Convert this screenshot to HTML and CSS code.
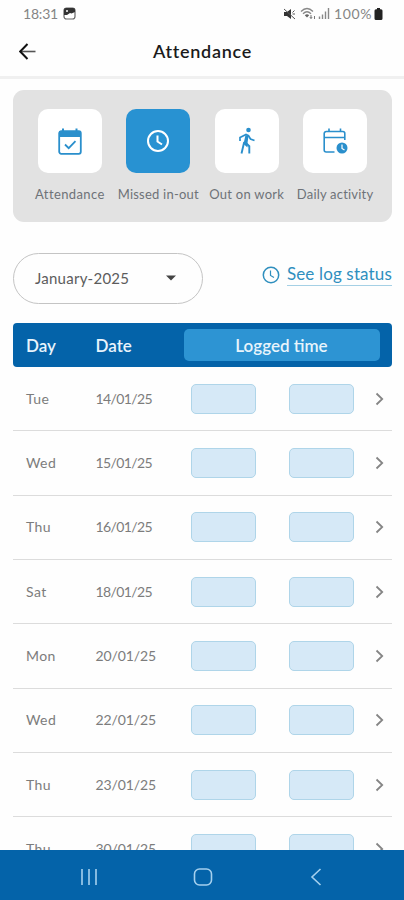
FILE: index.html
```html
<!DOCTYPE html>
<html lang="en">
<head>
    <meta charset="UTF-8">
    <meta name="viewport" content="width=device-width, initial-scale=1.0">
    <title>Attendance</title>
    <link rel="stylesheet" href="styles.css">
</head>
<body>
    <!-- Status bar -->
    <div class="status-bar">
        <span class="clock">18:31</span>
        <svg class="picture-icon" width="13" height="13" viewBox="0 0 13 13">
            <rect x="1" y="1" width="11" height="11" rx="2.500" fill="#fff" stroke="#666" stroke-width="1.200"/>
            <path d="M1 8V3a2 2 0 0 1 2-2h7a2 2 0 0 1 2 2v2L8.500 6.500 7 6 4 8z" fill="#333"/>
            <circle cx="4" cy="4" r="1" fill="#fff"/>
        </svg>
        <div class="status-right">
            <svg width="13" height="12" viewBox="0 0 13 12">
                <path d="M1 4h3l4-3v10L4 8H1z" fill="#333"/>
                <path d="M1 1l11 10M9.500 4.500l2-2M9.500 6h2.500" stroke="#555" fill="none"/>
            </svg>
            <svg class="wifi-icon" width="17" height="13" viewBox="0 0 17 13">
                <path d="M1 4.500q6-6 12 0M3 6.700q4-4 8 0" stroke="#888" stroke-width="1.300" fill="none"/>
                <path d="M4.800 8.200q2.200-2 4.400 0L7 10.500z" fill="#666"/>
                <path d="M11 8v3.500M9.800 10l1.200 1.500 1.200-1.500M14.500 12V9" stroke="#777" fill="none"/>
            </svg>
            <svg class="signal-icon" width="12" height="11" viewBox="0 0 12 11">
                <path d="M1.500 11V8.500M4.500 11V6.500M7.500 11V3.500M10.500 11V0" stroke="#888" stroke-width="1.400"/>
            </svg>
            <span class="battery-text">100%</span>
            <svg width="9" height="12" viewBox="0 0 9 12">
                <path d="M3 0h3v1.300h1a1.500 1.500 0 0 1 1.500 1.500v7.700A1.500 1.500 0 0 1 7 12H2A1.500 1.500 0 0 1 .5 10.500V2.800A1.500 1.500 0 0 1 2 1.300h1z" fill="#222"/>
            </svg>
        </div>
    </div>

    <header class="app-bar">
        <svg class="back-icon" width="17" height="17" viewBox="0 0 17 17">
            <path d="M16.500 8.500H1.500" stroke="#555" stroke-width="1.600" fill="none"/>
            <path d="M8.500 1L1.200 8.500l7.300 7.500" stroke="#111" stroke-width="2" fill="none"/>
        </svg>
        <h1>Attendance</h1>
    </header>

    <main>
        <nav class="tabs">
            <div class="tab">
                <div class="tile">
                    <svg width="24" height="27" viewBox="0 0 24 27">
                        <path d="M5 .5v3M18.500.5v3" stroke="#2a8fcc" stroke-width="2"/>
                        <rect x="1.200" y="3.200" width="21.600" height="22.600" rx="2" fill="#fff" stroke="#2a8fcc" stroke-width="1.800"/>
                        <path d="M1 3h22v6H1z" fill="#2a8fcc"/>
                        <path d="M7 16.500l3.700 3.700 6.800-7" stroke="#2a8fcc" stroke-width="1.800" fill="none"/>
                    </svg>
                </div>
                <span class="tab-label label-attendance">Attendance</span>
            </div>
            <div class="tab">
                <div class="tile active">
                    <svg width="24" height="24" viewBox="0 0 24 24" fill="none" stroke="#fff" stroke-width="2">
                        <circle cx="12" cy="12" r="10"/>
                        <path d="M11.500 6.500v6l4.500 3"/>
                    </svg>
                </div>
                <span class="tab-label label-missed">Missed in-out</span>
            </div>
            <div class="tab">
                <div class="tile">
                    <svg width="18" height="28" viewBox="0 0 18 28" fill="none" stroke="#2a8fcc">
                        <circle cx="10.500" cy="3" r="2.300" fill="#2a8fcc" stroke="none"/>
                        <path d="M7.500 8L5.500 17l4 3.500V16l1-7z" fill="#2a8fcc" stroke="none"/>
                        <path d="M2 14v-3.500L8 7.500l2.500 1.200 2 3.300 4 1.500" stroke-width="1.700"/>
                        <path d="M6.200 15L3.500 26.500M8 16l3.300 3.200V26.500" stroke-width="1.900"/>
                    </svg>
                </div>
                <span class="tab-label label-out">Out on work</span>
            </div>
            <div class="tab">
                <div class="tile">
                    <svg width="25" height="26" viewBox="0 0 25 26" fill="none" stroke="#2a8fcc" stroke-width="1.600">
                        <path d="M6 .5v3M17.500.5v3"/>
                        <path d="M11.500 24H3.200a2 2 0 0 1-2-2V5.500a2 2 0 0 1 2-2h16.600a2 2 0 0 1 2 2V12M1.200 9.500h20.600"/>
                        <circle cx="19" cy="20" r="5.500" fill="#2a8fcc" stroke="none"/>
                        <path d="M19 16.500v4l2.500 1.500" stroke="#fff" stroke-width="1.200"/>
                    </svg>
                </div>
                <span class="tab-label label-daily">Daily activity</span>
            </div>
        </nav>

        <div class="filters">
            <div class="month-select">
                <span>January-2025</span>
                <svg width="10" height="6" viewBox="0 0 10 6"><path d="M0 .5h10L5 5.500z" fill="#444"/></svg>
            </div>
            <a class="log-status">
                <svg width="18" height="18" viewBox="0 0 18 18" fill="none" stroke="#2f8fbe" stroke-width="1.500">
                    <circle cx="9" cy="9" r="7.700"/>
                    <path d="M8.500 4.500v5l3.500 2" stroke-width="1.200"/>
                </svg>
                <span>See log status</span>
            </a>
        </div>

        <div class="table-head">
            <span class="head-day">Day</span>
            <span class="head-date">Date</span>
            <div class="head-time"><span>Logged time</span></div>
        </div>

        <div class="rows">
            <div class="row">
                <span class="day">Tue</span><span class="date">14/01/25</span>
                <div class="time"></div><div class="time"></div>
                <svg class="chevron" width="9" height="14" viewBox="0 0 9 14"><path d="M1.500 1.500L7.200 7l-5.700 5.500"/></svg>
            </div>
            <div class="row">
                <span class="day">Wed</span><span class="date">15/01/25</span>
                <div class="time"></div><div class="time"></div>
                <svg class="chevron" width="9" height="14" viewBox="0 0 9 14"><path d="M1.500 1.500L7.200 7l-5.700 5.500"/></svg>
            </div>
            <div class="row">
                <span class="day">Thu</span><span class="date">16/01/25</span>
                <div class="time"></div><div class="time"></div>
                <svg class="chevron" width="9" height="14" viewBox="0 0 9 14"><path d="M1.500 1.500L7.200 7l-5.700 5.500"/></svg>
            </div>
            <div class="row">
                <span class="day">Sat</span><span class="date">18/01/25</span>
                <div class="time"></div><div class="time"></div>
                <svg class="chevron" width="9" height="14" viewBox="0 0 9 14"><path d="M1.500 1.500L7.200 7l-5.700 5.500"/></svg>
            </div>
            <div class="row">
                <span class="day">Mon</span><span class="date wide">20/01/25</span>
                <div class="time"></div><div class="time"></div>
                <svg class="chevron" width="9" height="14" viewBox="0 0 9 14"><path d="M1.500 1.500L7.200 7l-5.700 5.500"/></svg>
            </div>
            <div class="row">
                <span class="day">Wed</span><span class="date wide">22/01/25</span>
                <div class="time"></div><div class="time"></div>
                <svg class="chevron" width="9" height="14" viewBox="0 0 9 14"><path d="M1.500 1.500L7.200 7l-5.700 5.500"/></svg>
            </div>
            <div class="row">
                <span class="day">Thu</span><span class="date wide">23/01/25</span>
                <div class="time"></div><div class="time"></div>
                <svg class="chevron" width="9" height="14" viewBox="0 0 9 14"><path d="M1.500 1.500L7.200 7l-5.700 5.500"/></svg>
            </div>
            <div class="row">
                <span class="day">Thu</span><span class="date wide">30/01/25</span>
                <div class="time"></div><div class="time"></div>
                <svg class="chevron" width="9" height="14" viewBox="0 0 9 14"><path d="M1.500 1.500L7.200 7l-5.700 5.500"/></svg>
            </div>
        </div>
    </main>

    <!-- System navigation -->
    <footer class="nav-bar">
        <svg width="18" height="18" viewBox="0 0 18 18"><path d="M2 1v16M9 1v16M16 1v16"/></svg>
        <svg width="20" height="18" viewBox="0 0 20 18"><rect x="1.500" y="1" width="17" height="16" rx="5"/></svg>
        <svg width="12" height="18" viewBox="0 0 12 18"><path d="M10.500 1L2 9l8.500 8"/></svg>
    </footer>
</body>
</html>
```
FILE: styles.css
```css
* {
    box-sizing: border-box;
}

body {
    margin: 0;
    height: 900px;
    overflow: hidden;
    display: flex;
    flex-direction: column;
    background: #fefefe;
    font-family: Lato, "Open Sans", sans-serif;
    color: #666;
    white-space: nowrap;
}

svg {
    display: block;
    flex: none;
}

.status-bar {
    display: flex;
    align-items: center;
    height: 27px;
    padding: 0 21px 0 23px;
    font-size: 14px;
    color: #858585;
}

.clock {
    width: 40px;
    letter-spacing: -0.2px;
}

.status-right {
    display: flex;
    align-items: center;
    margin-left: auto;
}

.wifi-icon {
    margin-left: 4px;
}

.signal-icon {
    margin: 0 4px 0 1px;
}

.battery-text {
    width: 40px;
    letter-spacing: 0.6px;
}

.app-bar {
    display: grid;
    grid-template-columns: 60px 1fr 60px;
    align-items: center;
    height: 52px;
    padding-bottom: 2px;
    border-bottom: 3px solid #f0f0f0;
}

.back-icon {
    margin: 1px 0 0 19px;
}

h1 {
    margin: 0;
    padding-left: 1px;
    font-size: 18px;
    line-height: 24px;
    font-weight: 600;
    letter-spacing: 0.7px;
    text-align: center;
    color: #1b1b1b;
}

main {
    flex: 1;
    min-height: 0;
    overflow: hidden;
    padding: 11px 12px 0 13px;
}

.tabs {
    display: grid;
    grid-template-columns: repeat(4, 88.4px);
    justify-content: center;
    height: 132px;
    padding-top: 19px;
    border-radius: 11px;
    background: #e2e2e2;
}

.tab {
    display: flex;
    flex-direction: column;
    align-items: center;
}

.tile {
    display: flex;
    align-items: center;
    justify-content: center;
    width: 64px;
    height: 64px;
    border-radius: 10px;
    background: #fff;
}

.active {
    background: #2892d2;
}

.tab-label {
    margin-top: 12px;
    font-size: 13px;
    line-height: 18px;
    color: #6e7278;
}

.label-attendance {
    letter-spacing: 0.4px;
}

.label-missed {
    letter-spacing: 0.22px;
}

.label-out {
    letter-spacing: 0.25px;
}

.label-daily {
    letter-spacing: 0.2px;
}

.filters {
    display: flex;
    align-items: flex-start;
    justify-content: space-between;
    height: 101px;
    padding-top: 31px;
}

.month-select {
    display: flex;
    align-items: center;
    justify-content: space-between;
    width: 190px;
    height: 51px;
    padding: 0 26px 2px 21px;
    border: 1px solid #c4c4c4;
    border-radius: 26px;
    font-size: 15px;
    letter-spacing: 0.25px;
    color: #5c5c5c;
}

.log-status {
    display: flex;
    align-items: center;
    gap: 7px;
    padding-top: 10px;
    font-size: 17px;
    line-height: 22px;
    letter-spacing: 0.15px;
    color: #2f8fbe;
}

.log-status span {
    border-bottom: 1px solid #a5d0e5;
}

.table-head {
    display: flex;
    align-items: center;
    height: 44px;
    padding-left: 13px;
    border-radius: 4px;
    background: #0463a9;
    font-size: 17px;
    font-weight: 600;
    color: #e8f4fc;
}

.head-day {
    width: 69.5px;
}

.head-date {
    width: 88px;
}

.head-time {
    width: 196px;
    height: 32px;
    line-height: 33px;
    border-radius: 5px;
    background: #2d94d3;
    text-align: center;
}

.row {
    display: grid;
    grid-template-columns: 69.5px 95px 98px 86px 9px;
    align-items: center;
    height: 64.35px;
    padding-left: 13px;
    border-bottom: 1px solid #dcdcdc;
    font-size: 14px;
    color: #7c7c7c;
}

.day,
.date {
    padding-bottom: 1px;
}

.day {
    letter-spacing: 0.4px;
}

.date {
    letter-spacing: -0.6px;
}

.wide {
    letter-spacing: -0.1px;
}

.time {
    width: 65px;
    height: 30px;
    border: 1px solid #afd5e9;
    border-radius: 5px;
    background: #d6e9f7;
}

.chevron {
    fill: none;
    stroke: #858585;
    stroke-width: 1.8;
}

.nav-bar {
    display: flex;
    align-items: center;
    justify-content: space-between;
    height: 50px;
    padding: 4px 82px 0 80px;
    background: #0463a9;
    fill: none;
    stroke: #a5d0ee;
    stroke-width: 1.6;
}

.nav-bar svg:nth-child(2) {
    margin-right: 3px;
}
```
